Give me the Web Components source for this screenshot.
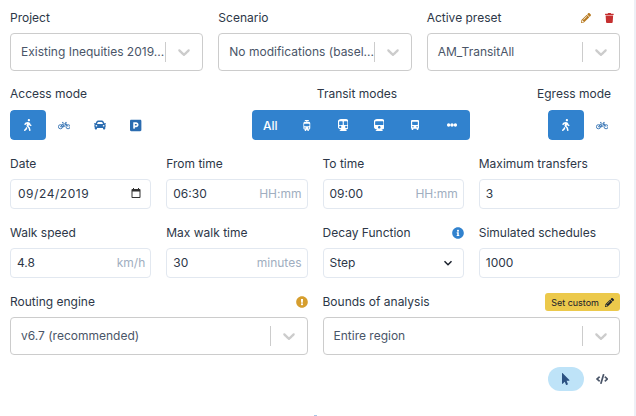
<!DOCTYPE html>
<html>
<head>
<meta charset="utf-8">
<title>Analysis settings</title>
<style>
  html, body { margin: 0; height: 100%; overflow: hidden; background: #fff; }
  body { font-family: Inter, "Liberation Sans", sans-serif; font-size: 12px; color: #2d3748; }
</style>
</head>
<body>
<settings-panel>
  <form-row>
    <form-field label="Project"><select-box value="Existing Inequities 2019..." tight></select-box></form-field>
    <form-field label="Scenario"><select-box value="No modifications (basel..." tight></select-box></form-field>
    <form-field label="Active preset">
      <span slot="action" class="acts">
        <svg-icon name="pencil" size="10" style="color:#b7791f"></svg-icon>
        <svg-icon name="trash" size="10" style="color:#c53030"></svg-icon>
      </span>
      <select-box value="AM_TransitAll"></select-box>
    </form-field>
  </form-row>

  <mode-row>
    <mode-group label="Access mode">
      <mode-button active icon="walking"></mode-button>
      <mode-button icon="bicycle" icon-size="10"></mode-button>
      <mode-button icon="car"></mode-button>
      <mode-button icon="parking" icon-size="13"></mode-button>
    </mode-group>
    <mode-group label="Transit modes" center>
      <mode-button active joined>All</mode-button>
      <mode-button active joined icon="tram" icon-size="11"></mode-button>
      <mode-button active joined icon="subway"></mode-button>
      <mode-button active joined icon="train"></mode-button>
      <mode-button active joined icon="bus" icon-size="10"></mode-button>
      <mode-button active joined icon="ellipsis"></mode-button>
    </mode-group>
    <mode-group label="Egress mode" end>
      <mode-button active icon="walking"></mode-button>
      <mode-button icon="bicycle" icon-size="10"></mode-button>
    </mode-group>
  </mode-row>

  <form-row>
    <form-field label="Date"><text-box value="09/24/2019" date></text-box></form-field>
    <form-field label="From time"><text-box value="06:30" addon="HH:mm"></text-box></form-field>
    <form-field label="To time"><text-box value="09:00" addon="HH:mm"></text-box></form-field>
    <form-field label="Maximum transfers"><text-box value="3"></text-box></form-field>
  </form-row>

  <form-row>
    <form-field label="Walk speed"><text-box value="4.8" addon="km/h"></text-box></form-field>
    <form-field label="Max walk time"><text-box value="30" addon="minutes"></text-box></form-field>
    <form-field label="Decay Function">
      <svg-icon slot="action" name="info" size="12" style="color:#3182ce"></svg-icon>
      <text-box value="Step" chevron></text-box>
    </form-field>
    <form-field label="Simulated schedules"><text-box value="1000"></text-box></form-field>
  </form-row>

  <form-row>
    <form-field label="Routing engine">
      <svg-icon slot="action" name="warning" size="12" style="color:#d69e2e"></svg-icon>
      <select-box value="v6.7 (recommended)"></select-box>
    </form-field>
    <form-field label="Bounds of analysis">
      <custom-button slot="action">Set custom</custom-button>
      <select-box value="Entire region"></select-box>
    </form-field>
  </form-row>

  <view-toggle></view-toggle>
</settings-panel>

<script>
const ICONS = {
  walking: ['0 0 320 512', 'M208 96c26.5 0 48-21.5 48-48S234.5 0 208 0s-48 21.5-48 48 21.5 48 48 48zm94.5 149.1l-23.3-11.8-9.7-29.4c-14.7-44.6-55.7-75.8-102.2-75.9-36-.1-55.9 10.1-93.3 25.2-21.6 8.7-39.3 25.2-49.7 46.2L17.6 213c-7.8 15.8-1.5 35 14.2 42.9 15.6 7.9 34.6 1.5 42.5-14.3L81 228c3.5-7 9.3-12.5 16.5-15.4l26.8-10.8-15.2 60.7c-5.2 20.8.4 42.9 14.9 58.8l59.9 65.4c7.2 7.9 12.3 17.4 14.9 27.7l18.3 73.3c4.3 17.1 21.7 27.6 38.8 23.3 17.1-4.3 27.6-21.7 23.3-38.8l-22.2-89c-2.6-10.3-7.7-19.9-14.9-27.7l-45.5-49.7 17.2-68.7 5.5 16.5c5.3 16.1 16.7 29.4 31.7 37l23.3 11.8c15.6 7.9 34.6 1.5 42.5-14.3 7.7-15.7 1.4-35.1-14.3-43zM73.6 385.8c-3.2 8.1-8 15.4-14.2 21.5l-50 50.1c-12.5 12.5-12.5 32.8 0 45.3s32.7 12.5 45.2 0l59.4-59.4c6.1-6.1 10.9-13.4 14.2-21.5l13.5-33.8c-55.3-60.3-38.7-41.8-47.4-53.7l-20.7 51.5z'],
  car: ['0 0 512 512', 'M499.99 176h-59.87l-16.64-41.6C406.38 91.63 365.57 64 319.5 64h-127c-46.06 0-86.88 27.63-103.99 70.4L71.87 176H12.01C4.2 176-1.53 183.34.37 190.91l6 24C7.7 220.25 12.5 224 18.01 224h20.07C24.65 235.73 16 252.78 16 272v48c0 16.12 6.16 30.67 16 41.93V416c0 17.67 14.33 32 32 32h32c17.67 0 32-14.33 32-32v-32h256v32c0 17.67 14.33 32 32 32h32c17.67 0 32-14.33 32-32v-54.07c9.84-11.25 16-25.8 16-41.93v-48c0-19.22-8.65-36.27-22.07-48H494c5.51 0 10.31-3.75 11.64-9.09l6-24c1.89-7.57-3.84-14.91-11.65-14.91zm-352.06-17.83c7.29-18.22 24.94-30.17 44.57-30.17h127c19.63 0 37.28 11.95 44.57 30.17L384 208H128l19.93-49.83zM96 319.8c-19.2 0-32-12.76-32-31.9S76.8 256 96 256s48 28.71 48 47.85-28.8 15.95-48 15.95zm320 0c-19.2 0-48 3.19-48-15.95S396.8 256 416 256s32 12.76 32 31.9-12.8 31.9-32 31.9z'],
  parking: ['0 0 448 512', 'M400 32H48C21.5 32 0 53.5 0 80v352c0 26.5 21.5 48 48 48h352c26.5 0 48-21.5 48-48V80c0-26.5-21.5-48-48-48zM240 320h-48v48c0 8.8-7.2 16-16 16h-32c-8.8 0-16-7.2-16-16V144c0-8.8 7.2-16 16-16h96c52.9 0 96 43.1 96 96s-43.1 96-96 96zm0-128h-48v64h48c17.6 0 32-14.4 32-32s-14.4-32-32-32z'],
  bus: ['0 0 410 512', 'M60 0h290c33 0 60 27 60 60v332c0 25-14 46-34 52v38c0 17-13 30-30 30h-24c-17 0-30-13-30-30v-30H118v30c0 17-13 30-30 30H64c-17 0-30-13-30-30v-38C14 438 0 417 0 392V60C0 27 27 0 60 0zM80 90c-11 0-20 9-20 20v120c0 11 9 20 20 20h250c11 0 20-9 20-20V110c0-11-9-20-20-20zM100 310a38 38 0 1 0 0 76 38 38 0 1 0 0-76zm210 0a38 38 0 1 0 0 76 38 38 0 1 0 0-76z'],
  subway: ['0 0 448 512', 'M448 96v256c0 51.815-61.624 96-130.022 96l62.98 49.721C386.905 502.417 383.562 512 376 512H72c-7.578 0-10.892-9.594-4.957-14.279L130.022 448C61.82 448 0 403.954 0 352V96C0 42.981 64 0 128 0h192c65 0 128 42.981 128 96zM200 232V120c0-13.255-10.745-24-24-24H72c-13.255 0-24 10.745-24 24v112c0 13.255 10.745 24 24 24h104c13.255 0 24-10.745 24-24zm200 0V120c0-13.255-10.745-24-24-24H272c-13.255 0-24 10.745-24 24v112c0 13.255 10.745 24 24 24h104c13.255 0 24-10.745 24-24zm-48 56c-26.51 0-48 21.49-48 48s21.49 48 48 48 48-21.49 48-48-21.49-48-48-48zm-256 0c-26.51 0-48 21.49-48 48s21.49 48 48 48 48-21.49 48-48-21.49-48-48-48z'],
  train: ['0 0 448 512', 'M448 96v256c0 51.815-61.624 96-130.022 96l62.98 49.721C386.905 502.417 383.562 512 376 512H72c-7.578 0-10.892-9.594-4.957-14.279L130.022 448C61.82 448 0 403.954 0 352V96C0 42.981 64 0 128 0h192c65 0 128 42.981 128 96zm-48 136V120c0-13.255-10.745-24-24-24H72c-13.255 0-24 10.745-24 24v112c0 13.255 10.745 24 24 24h304c13.255 0 24-10.745 24-24zm-176 64c-30.928 0-56 25.072-56 56s25.072 56 56 56 56-25.072 56-56-25.072-56-56-56z'],
  tram: ['0 0 448 512', 'M130 0h188v44h-70v36h60c44 0 76 32 76 76v220c0 44-32 76-76 76h-8l30 60h-70l-20-60h-32l-20 60h-70l30-60h-8c-44 0-76-32-76-76V156c0-44 32-76 76-76h60V44h-70zM120 170c-11 0-20 9-20 20v80c0 11 9 20 20 20h208c11 0 20-9 20-20v-80c0-11-9-20-20-20zM140 340a30 30 0 1 0 0 60 30 30 0 1 0 0-60zm168 0a30 30 0 1 0 0 60 30 30 0 1 0 0-60z'],
  ellipsis: ['0 0 512 512', 'M184 256a72 72 0 1 1-144 0 72 72 0 0 1 144 0zm144 0a72 72 0 1 1-144 0 72 72 0 0 1 144 0zm144 0a72 72 0 1 1-144 0 72 72 0 0 1 144 0z'],
  pencil: ['0 0 512 512', 'M497.9 142.1l-46.1 46.1c-4.7 4.7-12.3 4.7-17 0l-111-111c-4.7-4.7-4.7-12.3 0-17l46.1-46.1c18.7-18.7 49.1-18.7 67.9 0l60.1 60.1c18.8 18.7 18.8 49.1 0 67.9zM284.2 99.8L21.6 362.4.4 483.9c-2.9 16.4 11.4 30.6 27.8 27.8l121.5-21.3 262.6-262.6c4.7-4.7 4.7-12.3 0-17l-111-111c-4.8-4.7-12.4-4.7-17.1 0zM124.1 339.9c-5.5-5.5-5.5-14.3 0-19.8l154-154c5.5-5.5 14.3-5.5 19.8 0s5.5 14.3 0 19.8l-154 154c-5.5 5.5-14.3 5.5-19.8 0zM88 424h48v36.3l-64.5 11.3-31.1-31.1L51.7 376H88v48z'],
  trash: ['0 0 448 512', 'M432 32H312l-9.4-18.7A24 24 0 0 0 281.1 0H166.8a23.72 23.72 0 0 0-21.4 13.3L136 32H16A16 16 0 0 0 0 48v32a16 16 0 0 0 16 16h416a16 16 0 0 0 16-16V48a16 16 0 0 0-16-16zM53.2 467a48 48 0 0 0 47.9 45h245.8a48 48 0 0 0 47.9-45L416 128H32z'],
  info: ['0 0 512 512', 'M256 8C119.043 8 8 119.083 8 256c0 136.997 111.043 248 248 248s248-111.003 248-248C504 119.083 392.957 8 256 8zm0 110c23.196 0 42 18.804 42 42s-18.804 42-42 42-42-18.804-42-42 18.804-42 42-42zm56 254c0 6.627-5.373 12-12 12h-88c-6.627 0-12-5.373-12-12v-24c0-6.627 5.373-12 12-12h12v-64h-12c-6.627 0-12-5.373-12-12v-24c0-6.627 5.373-12 12-12h64c6.627 0 12 5.373 12 12v100h12c6.627 0 12 5.373 12 12v24z'],
  warning: ['0 0 512 512', 'M504 256c0 136.997-111.043 248-248 248S8 392.997 8 256C8 119.083 119.043 8 256 8s248 111.083 248 248zm-248 50c-25.405 0-46 20.595-46 46s20.595 46 46 46 46-20.595 46-46-20.595-46-46-46zm-43.673-165.346l7.418 136c.347 6.364 5.609 11.346 11.982 11.346h48.546c6.373 0 11.635-4.982 11.982-11.346l7.418-136c.375-6.874-5.098-12.654-11.982-12.654h-63.383c-6.884 0-12.356 5.78-11.981 12.654z'],
  pointer: ['0 0 320 512', 'M302.189 329.126H196.105l55.831 135.993c3.889 9.428-.555 19.999-9.444 23.999l-49.165 21.427c-9.165 4-19.443-.571-23.332-9.714l-53.053-129.136-86.664 89.138C18.729 472.71 0 463.554 0 447.977V18.299C0 1.899 19.921-6.096 30.277 5.443l284.412 292.542c11.472 11.179 3.007 31.141-12.5 31.141z'],
  code: ['0 0 640 512', 'M278.9 511.5l-61-17.7c-6.4-1.8-10-8.5-8.2-14.9L346.2 8.7c1.8-6.4 8.5-10 14.9-8.2l61 17.7c6.4 1.8 10 8.5 8.2 14.9L293.8 503.3c-1.9 6.4-8.5 10.1-14.9 8.2zm-114-112.2l43.5-46.4c4.6-4.9 4.3-12.7-.8-17.2L117 256l90.6-79.7c5.1-4.5 5.5-12.3.8-17.2l-43.5-46.4c-4.5-4.8-12.1-5.1-17-.5L3.8 247.2c-5.1 4.7-5.1 12.8 0 17.5l144.1 135.1c4.9 4.6 12.5 4.4 17-.5zm327.2.6l144.1-135.1c5.1-4.7 5.1-12.8 0-17.5L492.1 112.1c-4.8-4.5-12.4-4.3-17 .5L431.6 159c-4.6 4.9-4.3 12.7.8 17.2L523 256l-90.6 79.7c-5.1 4.5-5.5 12.3-.8 17.2l43.5 46.4c4.5 4.9 12.1 5.1 17 .6z']
}

class SvgIcon extends HTMLElement {
  connectedCallback() {
    const size = Number(this.getAttribute('size')) || 12
    const name = this.getAttribute('name')
    this.attachShadow({ mode: 'open' })
    let art
    if (name === 'bicycle') {
      art = `<svg viewBox="0 0 640 512" width="${size * 1.25}" height="${size}" fill="none" stroke="currentColor" stroke-width="44">
        <circle cx="125" cy="345" r="105"/><circle cx="515" cy="345" r="105"/>
        <path d="M125 345l115-145h170l105 145M240 200l70 145h-185M310 345l100-145M205 125h75M410 200l-24-75h60"/>
      </svg>`
    } else if (name === 'calendar') {
      art = `<svg viewBox="0 0 24 24" width="${size}" height="${size}" fill="currentColor"><path d="M19 4h-1V2h-2v2H8V2H6v2H5c-1.1 0-2 .9-2 2v14c0 1.1.9 2 2 2h14c1.1 0 2-.9 2-2V6c0-1.1-.9-2-2-2zm0 16H5V9h14v11z"/></svg>`
    } else {
      const [box, d] = ICONS[name]
      const [, , w, h] = box.split(' ').map(Number)
      art = `<svg viewBox="${box}" width="${size * w / h}" height="${size}" fill="currentColor" fill-rule="evenodd"><path d="${d}"/></svg>`
    }
    this.shadowRoot.innerHTML = `
      <style>
        :host { display: inline-flex; align-items: center; justify-content: center; line-height: 0; }
      </style>
      ${art}
    `
  }
}
customElements.define('svg-icon', SvgIcon)

class SettingsPanel extends HTMLElement {
  constructor() {
    super()
    this.attachShadow({ mode: 'open' })
    this.shadowRoot.innerHTML = `
      <style>
        :host {
          display: flex;
          flex-direction: column;
          gap: 14px;
          box-sizing: border-box;
          height: 416px;
          padding: 8px 14px 0 10px;
          border-right: 2px solid #edf0f6;
        }
        /* top edge of whatever sits below the fold */
        .peek { align-self: center; flex: none; width: 3px; height: 1px; margin-top: 10px; background: #a9c6e4; }
      </style>
      <slot></slot>
      <div class="peek"></div>
    `
  }
}
customElements.define('settings-panel', SettingsPanel)

class FormRow extends HTMLElement {
  constructor() {
    super()
    this.attachShadow({ mode: 'open' })
    this.shadowRoot.innerHTML = `
      <style>
        :host { display: flex; gap: 15px; }
        ::slotted(*) { flex: 1 1 0; min-width: 0; }
      </style>
      <slot></slot>
    `
  }
}
customElements.define('form-row', FormRow)

class FormField extends HTMLElement {
  constructor() {
    super()
    this.attachShadow({ mode: 'open' })
    this.shadowRoot.innerHTML = `
      <style>
        :host { display: flex; flex-direction: column; gap: 5px; }
        .top { display: flex; justify-content: space-between; align-items: center; height: 20px; }
        label { font-size: 12px; color: #2d3748; padding-bottom: 2px; }
        ::slotted(.acts) { display: inline-flex; gap: 14px; padding-right: 6px; }
      </style>
      <div class="top"><label></label><slot name="action"></slot></div>
      <slot></slot>
    `
  }
  connectedCallback() {
    this.shadowRoot.querySelector('label').textContent = this.getAttribute('label')
  }
}
customElements.define('form-field', FormField)

class SelectBox extends HTMLElement {
  constructor() {
    super()
    this.attachShadow({ mode: 'open' })
    this.shadowRoot.innerHTML = `
      <style>
        :host {
          display: flex;
          align-items: center;
          box-sizing: border-box;
          height: 38px;
          background: #fff;
          border: 1px solid #ccc;
          border-radius: 4px;
          color: #4a5568;
          font-size: 12px;
        }
        .value { flex: 1; min-width: 0; padding: 0 0 2px 10px; white-space: nowrap; overflow: hidden; }
        .sep { width: 1px; height: 20px; background: #ccc; }
        .arrow { flex: none; width: 36px; display: flex; justify-content: center; color: #ccc; }
      </style>
      <span class="value"></span>
      <span class="sep"></span>
      <span class="arrow">
        <svg width="20" height="20" viewBox="0 0 20 20" fill="currentColor"><path d="M4.516 7.548c.436-.446 1.043-.481 1.576 0L10 11.295l3.908-3.747c.533-.481 1.141-.446 1.574 0 .436.445.408 1.197 0 1.615-.406.418-4.695 4.502-4.695 4.502a1.095 1.095 0 0 1-1.576 0S4.924 9.581 4.516 9.163s-.436-1.17 0-1.615z"/></svg>
      </span>
    `
  }
  connectedCallback() {
    this.shadowRoot.querySelector('.value').textContent = this.getAttribute('value')
  }
}
customElements.define('select-box', SelectBox)

class TextBox extends HTMLElement {
  constructor() {
    super()
    this.attachShadow({ mode: 'open' })
    this.shadowRoot.innerHTML = `
      <style>
        :host {
          display: flex;
          align-items: center;
          justify-content: space-between;
          box-sizing: border-box;
          height: 30px;
          padding: 0 5px 0 6px;
          background: #fff;
          border: 1px solid #e2e8f0;
          border-radius: 4px;
          color: #2d3748;
          font-size: 12px;
        }
        :host([date]) { padding: 0 8px 0 7px; letter-spacing: .55px; }
        :host([chevron]) { padding-right: 10px; }
        .value, .addon { padding-bottom: 2px; }
        .addon { color: #a0aec0; }
        svg-icon { color: #333; }
      </style>
      <span class="value"></span>
      <span class="end"></span>
    `
  }
  connectedCallback() {
    this.shadowRoot.querySelector('.value').textContent = this.getAttribute('value')
    const end = this.shadowRoot.querySelector('.end')
    if (this.hasAttribute('addon')) {
      end.className = 'addon'
      end.textContent = this.getAttribute('addon')
    } else if (this.hasAttribute('date')) {
      end.innerHTML = '<svg-icon name="calendar" size="12"></svg-icon>'
    } else if (this.hasAttribute('chevron')) {
      end.innerHTML = '<svg width="10" height="10" viewBox="0 0 20 20" fill="none" stroke="#1a202c" stroke-width="3"><path d="M3 6.5l7 7 7-7"/></svg>'
      end.style.lineHeight = 0
    }
  }
}
customElements.define('text-box', TextBox)

class ModeRow extends HTMLElement {
  constructor() {
    super()
    this.attachShadow({ mode: 'open' })
    this.shadowRoot.innerHTML = `
      <style>
        :host { display: flex; justify-content: space-between; align-items: flex-start; }
      </style>
      <slot></slot>
    `
  }
}
customElements.define('mode-row', ModeRow)

class ModeGroup extends HTMLElement {
  constructor() {
    super()
    this.attachShadow({ mode: 'open' })
    this.shadowRoot.innerHTML = `
      <style>
        :host { display: flex; flex-direction: column; gap: 5px; }
        :host([center]) { margin-left: 20px; }
        .name { height: 20px; line-height: 18px; font-size: 12px; color: #2d3748; white-space: nowrap; }
        :host([center]) .name { text-align: center; padding-right: 8px; }
        :host([end]) .name { margin-left: -11px; }
        .btns { display: flex; border-radius: 4px; overflow: hidden; }
      </style>
      <div class="name"></div>
      <div class="btns"><slot></slot></div>
    `
  }
  connectedCallback() {
    this.shadowRoot.querySelector('.name').textContent = this.getAttribute('label')
  }
}
customElements.define('mode-group', ModeGroup)

class ModeButton extends HTMLElement {
  constructor() {
    super()
    this.attachShadow({ mode: 'open' })
    this.shadowRoot.innerHTML = `
      <style>
        :host {
          display: flex;
          align-items: center;
          justify-content: center;
          width: 36px;
          height: 30px;
          border-radius: 4px;
          color: #2b6cb0;
          font-size: 12px;
          font-weight: 500;
        }
        :host([active]) { background: #3182ce; color: #fff; }
        :host([joined]) { width: 36.33px; border-radius: 0; }
      </style>
      <slot></slot>
    `
  }
  connectedCallback() {
    const icon = this.getAttribute('icon')
    const size = this.getAttribute('icon-size') || 12
    if (icon) this.shadowRoot.innerHTML += `<svg-icon name="${icon}" size="${size}"></svg-icon>`
  }
}
customElements.define('mode-button', ModeButton)

class CustomButton extends HTMLElement {
  constructor() {
    super()
    this.attachShadow({ mode: 'open' })
    this.shadowRoot.innerHTML = `
      <style>
        :host {
          display: inline-flex;
          align-items: center;
          gap: 6px;
          height: 18px;
          padding: 0 6px;
          background: #ecc94b;
          border-radius: 3px;
          color: #1a202c;
          font-size: 9px;
        }
      </style>
      <slot></slot>
      <svg-icon name="pencil" size="9"></svg-icon>
    `
  }
}
customElements.define('custom-button', CustomButton)

class ViewToggle extends HTMLElement {
  constructor() {
    super()
    this.attachShadow({ mode: 'open' })
    this.shadowRoot.innerHTML = `
      <style>
        :host { display: flex; justify-content: flex-end; margin-top: -2px; }
        span { display: flex; align-items: center; justify-content: center; width: 36px; height: 24px; border-radius: 12px; color: #4a5568; }
        .on { background: #bee3f8; color: #2c5282; }
      </style>
      <span class="on"><svg-icon name="pointer" size="12"></svg-icon></span>
      <span><svg-icon name="code" size="10"></svg-icon></span>
    `
  }
}
customElements.define('view-toggle', ViewToggle)
</script>
</body>
</html>
